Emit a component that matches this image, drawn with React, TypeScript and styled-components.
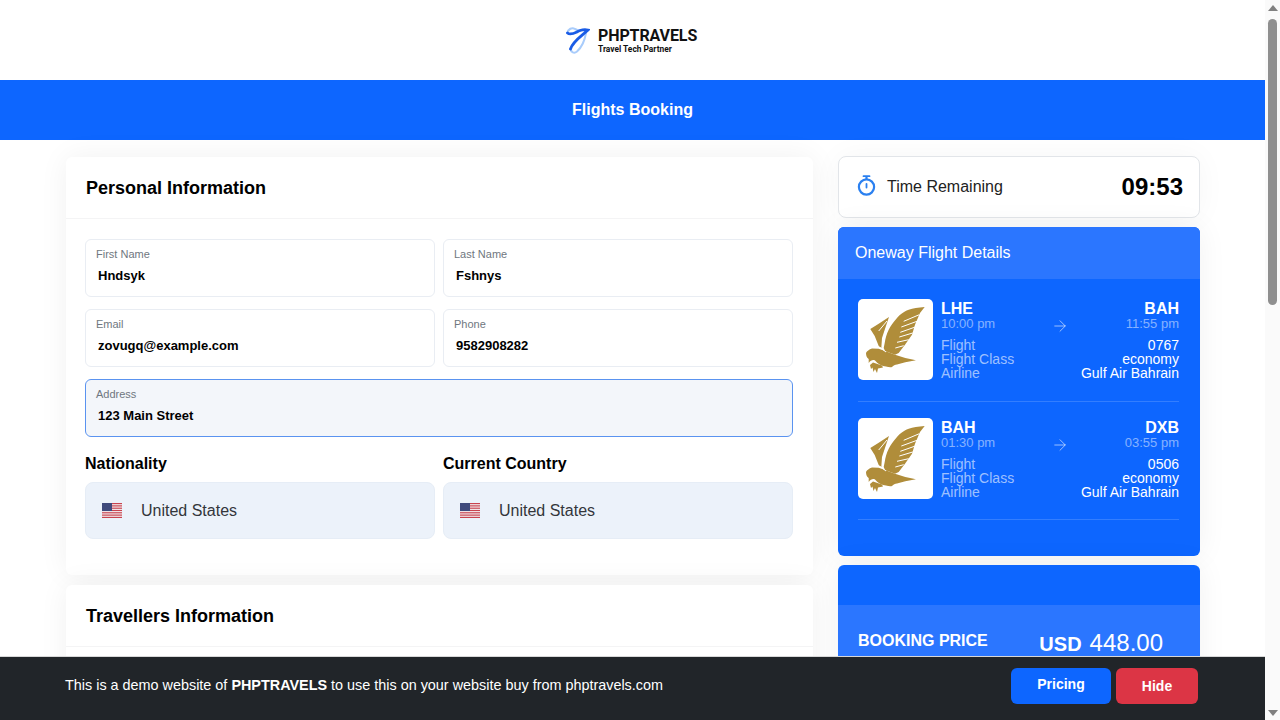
import React from "react";
import styled, { createGlobalStyle } from "styled-components";
import { ArrowRight } from "lucide-react";

const GlobalStyle = createGlobalStyle`
    body {
        margin: 0;
        padding-right: 15px;
        background: #fff;
        color: #000;
        font-family: "Liberation Sans", Arial, sans-serif;
    }
    * { box-sizing: border-box; }
`;

const Logo = () => (
    <svg width="24" height="28" viewBox="0 0 24 28" fill="none" strokeLinecap="round">
        <path d="M1.5 7C2 3 6 1 9 3C11 4 13 5 14 5" stroke="#a9ccfb" strokeWidth="2" />
        <path d="M20 7C19 13 16 21 11 25.5C8 28 5 26 4.5 23" stroke="#a9ccfb" strokeWidth="2" />
        <path d="M1.5 7C5 10 10 6 14 4.5C17 3.5 20 3.5 22 4C17 9 7 15 4.5 23" stroke="#1a5ce6" strokeWidth="2.8" />
    </svg>
);

const Eagle = () => (
    <svg width="75" height="81" viewBox="0 0 75 81">
        <g fill="#b08d3a">
            {/* front wing */}
            <path d="M66.7 8C60 8.5 55 9 50.7 10.7C45 13 42 15.5 39 19C35 23.5 32.5 27 30.7 30.7C28.5 35 27.5 39 26.7 44L25.7 49L27 52L37 55.7L40.7 54L47 45.7L54 35.7L57 25.7L62 14Z" />
            {/* back wing */}
            <path d="M31 18L20.7 24.7L12.3 30L16.7 37L20.7 47L23.3 49L24 39L27.3 29Z" />
            {/* head, body and tail */}
            <path d="M14 49.5C11 50.5 9 52 8 54C8 57 9 59 10.7 60L10.7 64C13 61 15 60.5 17 61.5C20 65 24 67.5 28 67.5C30 68 32.5 68.5 34 68C35.5 66.5 37 65.7 39 65.5L47.3 63.3L58 61.3L47.3 59L37 55.7L27 52L20.7 49.8Z" />
            {/* talons */}
            <path d="M24 66.5L15 63.5L12 66L13 70L14.5 68.5L15.5 73L17 70L19 74L20 69.5L25 68.5Z" />
        </g>
        <g stroke="#fff" strokeWidth="1" fill="none">
            <path d="M61.3 15.7L45.7 22.3" />
            <path d="M59 22.3L43.3 28" />
            <path d="M57.3 28L42.3 33.3" />
            <path d="M54.7 34L41.3 38" />
            <path d="M50.7 40.7L39 43.3" />
            <path d="M45.7 46.7L37.3 49" />
            <path d="M29 22L20.7 32" />
            <path d="M22 48.5L28 53" />
        </g>
    </svg>
);

const Flag = () => (
    <svg width="20" height="15" viewBox="0 0 20 15">
        <rect width="20" height="15" fill="#f4f4f6" />
        <g fill="#c8434f">
            <rect y="0" width="20" height="1.2" />
            <rect y="2.3" width="20" height="1.2" />
            <rect y="4.6" width="20" height="1.2" />
            <rect y="6.9" width="20" height="1.2" />
            <rect y="9.2" width="20" height="1.2" />
            <rect y="11.5" width="20" height="1.2" />
            <rect y="13.8" width="20" height="1.2" />
        </g>
        <rect width="10" height="8" fill="#3f4a7c" />
    </svg>
);

const StopwatchIcon = styled.svg`
    margin-bottom: 4px;
    flex: none;
`;

const Stopwatch = () => (
    <StopwatchIcon width="19" height="21" viewBox="0 0 19 21" fill="none" stroke="#2b80f0" strokeWidth="2.2">
        <circle cx="9.5" cy="12" r="7.6" />
        <path d="M6.5 1.2H12.5" strokeWidth="1.8" strokeLinecap="round" />
        <path d="M9.5 1.5V4" />
        <path d="M9.5 9V12.5" strokeWidth="1.8" strokeLinecap="round" />
    </StopwatchIcon>
);

const TopBar = styled.header`
    height: 80px;
    display: flex;
    align-items: center;
    justify-content: center;
    gap: 8px;
`;

const Brand = styled.div`
    font-family: Roboto, "Liberation Sans", sans-serif;
    color: #111;
    width: 101px;
`;

const BrandName = styled.div`
    font-size: 16px;
    font-weight: 700;
    line-height: 17px;
    letter-spacing: -0.1px;
`;

const BrandTag = styled.div`
    font-size: 8.4px;
    font-weight: 700;
    line-height: 10px;
`;

const Banner = styled.div`
    height: 60px;
    background: #0d66ff;
    color: #fff;
    font-size: 16px;
    font-weight: 700;
    display: flex;
    align-items: center;
    justify-content: center;
`;

const Main = styled.main`
    display: grid;
    grid-template-columns: 747px 362px;
    column-gap: 25px;
    align-items: start;
    padding: 17px 65px 0 66px;
    min-height: 1603px;
`;

const Column = styled.div`
    display: flex;
    flex-direction: column;
    gap: 10px;
`;

const Card = styled.section`
    background: #fff;
    border-radius: 6px;
    box-shadow: 0 0 30px rgba(0, 0, 0, 0.06);
`;

const CardHead = styled.div`
    height: 62px;
    padding: 0 20px;
    display: flex;
    align-items: center;
    border-bottom: 1px solid #f4f4f5;
`;

const CardTitle = styled.h2`
    margin: 0;
    font-size: 18px;
    font-weight: 700;
    line-height: 22px;
`;

const FormBody = styled.div`
    display: grid;
    grid-template-columns: 350px 350px;
    gap: 12px 8px;
    padding: 20px 19px 36px 19px;
`;

const Field = styled.div<{ $wide?: boolean; $focus?: boolean }>`
    grid-column: ${(p) => (p.$wide ? "1 / -1" : "auto")};
    height: 58px;
    padding: 8px 10px 0;
    border-radius: 6px;
    border: 1px solid ${(p) => (p.$focus ? "#5a93f0" : "#e9edf3")};
    background: ${(p) => (p.$focus ? "#f3f6fa" : "#fff")};
`;

const FieldLabel = styled.div`
    font-size: 11px;
    line-height: 13px;
    color: #6f7780;
`;

const FieldValue = styled.div`
    margin: 6px 0 0 2px;
    font-size: 13px;
    font-weight: 700;
    line-height: 18px;
`;

const SelectGroup = styled.div`
    margin-top: 5px;
`;

const SelectLabel = styled.div`
    font-size: 16px;
    font-weight: 700;
    line-height: 20px;
    margin-bottom: 8px;
`;

const SelectBox = styled.div`
    height: 57px;
    padding: 0 16px;
    display: flex;
    align-items: center;
    gap: 19px;
    background: #ecf2fa;
    border: 1px solid #e6edf6;
    border-radius: 8px;
    font-size: 16px;
    color: #33363b;
`;

const TravellersCard = styled(Card)`
    height: 640px;
`;

const TimerCard = styled.div`
    height: 62px;
    margin-top: -1px;
    padding: 0 16px 0 18px;
    display: flex;
    align-items: center;
    background: #fff;
    border: 1px solid #e2e5e9;
    border-radius: 8px;
    box-shadow: 0 0 30px rgba(0, 0, 0, 0.04);
`;

const TimerLabel = styled.div`
    flex: 1;
    margin-left: 11px;
    padding-bottom: 1px;
    font-size: 16px;
    color: #222;
`;

const TimerValue = styled.div`
    font-size: 24px;
    font-weight: 700;
`;

const BlueCard = styled.section`
    background: #0d66ff;
    border-radius: 6px;
    color: #fff;
    box-shadow: 0 0 30px rgba(0, 0, 0, 0.06);
    overflow: hidden;
`;

const SideColumn = styled(Column)`
    gap: 9px;
`;

const FlightHead = styled.div`
    height: 52px;
    padding: 0 17px;
    display: flex;
    align-items: center;
    background: #2b76ff;
    font-size: 16px;
`;

const FlightList = styled.div`
    padding: 20px 21px 35.5px 20px;
`;

const FlightRow = styled.div`
    display: flex;
    gap: 8px;
    padding-bottom: 20.5px;
    margin-bottom: 16.1px;
    border-bottom: 1px solid rgba(255, 255, 255, 0.16);
    &:last-child { margin-bottom: 0; }
`;

const LogoTile = styled.div`
    width: 75px;
    height: 81px;
    flex: none;
    background: #fff;
    border-radius: 5px;
`;

const FlightInfo = styled.div`
    flex: 1;
`;

const Route = styled.div`
    display: grid;
    grid-template-columns: 1fr auto 1fr;
    align-items: start;
`;

const Stop = styled.div<{ $end?: boolean }>`
    text-align: ${(p) => (p.$end ? "right" : "left")};
`;

const Code = styled.div`
    padding-top: 1px;
    font-size: 16px;
    font-weight: 700;
    line-height: 17px;
`;

const Time = styled.div`
    font-size: 13px;
    line-height: 14px;
    color: rgba(255, 255, 255, 0.5);
`;

const RouteArrow = styled(ArrowRight)`
    color: rgba(255, 255, 255, 0.65);
    margin: 18px 0 -4px;
`;

const Meta = styled.div`
    display: flex;
    justify-content: space-between;
    margin-top: 7px;
    font-size: 14px;
    line-height: 14px;
`;

const MetaKeys = styled.div`
    color: rgba(255, 255, 255, 0.6);
`;

const MetaValues = styled.div`
    text-align: right;
`;

const PriceSpacer = styled.div`
    height: 40px;
`;

const PriceBody = styled.div`
    height: 200px;
    padding: 25px 20px;
    background: #2b76ff;
    display: flex;
    justify-content: space-between;
`;

const PriceLabel = styled.div`
    font-size: 16px;
    font-weight: 700;
    line-height: 22px;
`;

const PriceAmount = styled.div`
    display: flex;
    align-items: baseline;
    gap: 8px;
    margin-right: 17px;
    font-size: 24px;
    line-height: 26px;
`;

const Currency = styled.span`
    font-size: 20px;
    font-weight: 700;
`;

const DemoBar = styled.div`
    position: fixed;
    left: 0;
    right: 15px;
    bottom: 0;
    height: 64px;
    padding: 0 67px 5px 65px;
    display: flex;
    align-items: center;
    background: #212529;
    border-top: 1px solid #d8d8d8;
    color: #fff;
    font-size: 14.4px;
`;

const DemoText = styled.div`
    flex: 1;
    padding-bottom: 2px;
`;

const BarButton = styled.button<{ $color: string; $width: number; $lift?: boolean }>`
    width: ${(p) => p.$width}px;
    height: 36px;
    margin-left: 5px;
    padding: 0 0 ${(p) => (p.$lift ? 4 : 0)}px;
    border: 0;
    border-radius: 6px;
    background: ${(p) => p.$color};
    color: #fff;
    font-family: inherit;
    font-size: 14px;
    font-weight: 700;
`;

const ScrollTrack = styled.div`
    position: fixed;
    top: 0;
    right: 0;
    bottom: 0;
    width: 15px;
    padding: 5px 0 4px;
    display: flex;
    flex-direction: column;
    align-items: center;
    background: #fafafa;
`;

const ScrollThumb = styled.div`
    width: 9px;
    height: 286px;
    margin-top: 8px;
    border-radius: 5px;
    background: #8f8f8f;
`;

const ScrollArrow = styled.div<{ $down?: boolean }>`
    width: 0;
    height: 0;
    border-left: 5px solid transparent;
    border-right: 5px solid transparent;
    ${(p) => (p.$down ? "border-top: 6px solid #808080; margin-top: auto;" : "border-bottom: 6px solid #808080;")}
`;

const flights = [
    { from: "LHE", to: "BAH", dep: "10:00 pm", arr: "11:55 pm", no: "0767" },
    { from: "BAH", to: "DXB", dep: "01:30 pm", arr: "03:55 pm", no: "0506" },
];

const fields = [
    { label: "First Name", value: "Hndsyk" },
    { label: "Last Name", value: "Fshnys" },
    { label: "Email", value: "zovugq@example.com" },
    { label: "Phone", value: "9582908282" },
];

const App = () => {
    return (
        <>
            <GlobalStyle />
            <TopBar>
                <Logo />
                <Brand>
                    <BrandName>PHPTRAVELS</BrandName>
                    <BrandTag>Travel Tech Partner</BrandTag>
                </Brand>
            </TopBar>
            <Banner>Flights Booking</Banner>
            <Main>
                {/* Forms */}
                <Column>
                    <Card>
                        <CardHead>
                            <CardTitle>Personal Information</CardTitle>
                        </CardHead>
                        <FormBody>
                            {fields.map((f) => (
                                <Field key={f.label}>
                                    <FieldLabel>{f.label}</FieldLabel>
                                    <FieldValue>{f.value}</FieldValue>
                                </Field>
                            ))}
                            <Field $wide $focus>
                                <FieldLabel>Address</FieldLabel>
                                <FieldValue>123 Main Street</FieldValue>
                            </Field>
                            {["Nationality", "Current Country"].map((label) => (
                                <SelectGroup key={label}>
                                    <SelectLabel>{label}</SelectLabel>
                                    <SelectBox>
                                        <Flag />
                                        United States
                                    </SelectBox>
                                </SelectGroup>
                            ))}
                        </FormBody>
                    </Card>
                    <TravellersCard>
                        <CardHead>
                            <CardTitle>Travellers Information</CardTitle>
                        </CardHead>
                    </TravellersCard>
                </Column>

                {/* Sidebar */}
                <SideColumn>
                    <TimerCard>
                        <Stopwatch />
                        <TimerLabel>Time Remaining</TimerLabel>
                        <TimerValue>09:53</TimerValue>
                    </TimerCard>
                    <BlueCard>
                        <FlightHead>Oneway Flight Details</FlightHead>
                        <FlightList>
                            {flights.map((f) => (
                                <FlightRow key={f.no}>
                                    <LogoTile>
                                        <Eagle />
                                    </LogoTile>
                                    <FlightInfo>
                                        <Route>
                                            <Stop>
                                                <Code>{f.from}</Code>
                                                <Time>{f.dep}</Time>
                                            </Stop>
                                            <RouteArrow size={18} strokeWidth={1.2} />
                                            <Stop $end>
                                                <Code>{f.to}</Code>
                                                <Time>{f.arr}</Time>
                                            </Stop>
                                        </Route>
                                        <Meta>
                                            <MetaKeys>
                                                <div>Flight</div>
                                                <div>Flight Class</div>
                                                <div>Airline</div>
                                            </MetaKeys>
                                            <MetaValues>
                                                <div>{f.no}</div>
                                                <div>economy</div>
                                                <div>Gulf Air Bahrain</div>
                                            </MetaValues>
                                        </Meta>
                                    </FlightInfo>
                                </FlightRow>
                            ))}
                        </FlightList>
                    </BlueCard>
                    <BlueCard>
                        <PriceSpacer />
                        <PriceBody>
                            <PriceLabel>BOOKING PRICE</PriceLabel>
                            <PriceAmount>
                                <Currency>USD</Currency> 448.00
                            </PriceAmount>
                        </PriceBody>
                    </BlueCard>
                </SideColumn>
            </Main>
            <DemoBar>
                <DemoText>
                    This is a demo website of <strong>PHPTRAVELS</strong> to use this on your website buy from phptravels.com
                </DemoText>
                <BarButton $color="#0d66ff" $width={100} $lift>Pricing</BarButton>
                <BarButton $color="#dc3545" $width={82}>Hide</BarButton>
            </DemoBar>
            {/* the window's own scrollbar, as it shows in the screenshot */}
            <ScrollTrack>
                <ScrollArrow />
                <ScrollThumb />
                <ScrollArrow $down />
            </ScrollTrack>
        </>
    );
};

export default App;
